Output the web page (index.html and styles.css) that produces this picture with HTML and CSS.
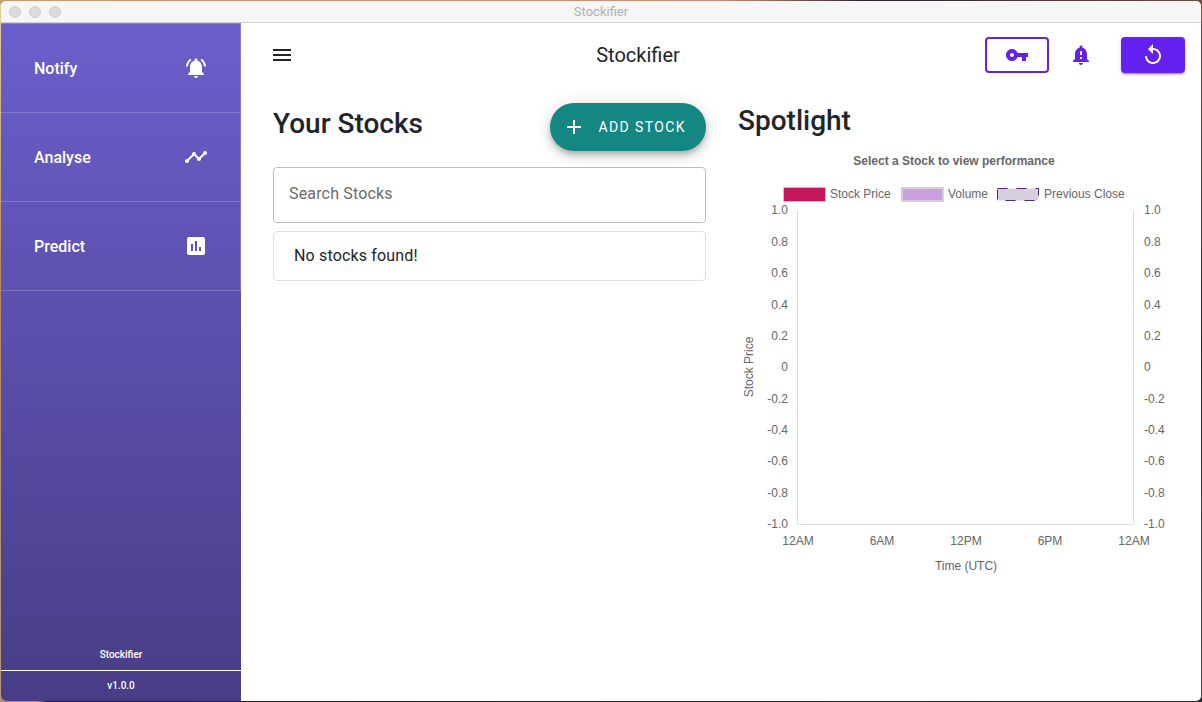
FILE: index.html
```html
<!DOCTYPE html>
<html lang="en">
<head>
<meta charset="utf-8">
<title>Stockifier</title>
<link rel="stylesheet" href="styles.css">
</head>
<body>
<div class="window">
  <div class="titlebar">
    <div class="lights"><span class="light"></span><span class="light"></span><span class="light"></span></div>
    <span class="window-title">Stockifier</span>
  </div>
  <div class="app">
    <aside class="sidebar">
      <nav class="nav">
        <a class="nav-item" href="#notify"><span>Notify</span>
          <svg class="icon" viewBox="0 0 24 24"><path d="M7.58 4.08L6.15 2.65C3.75 4.48 2.17 7.3 2.03 10.5h2c.15-2.65 1.51-4.97 3.55-6.42zm12.39 6.42h2c-.15-3.2-1.73-6.02-4.12-7.85l-1.42 1.43c2.02 1.45 3.39 3.77 3.54 6.42zM18 11c0-3.07-1.64-5.64-4.5-6.32V4c0-.83-.67-1.5-1.5-1.5s-1.5.67-1.5 1.5v.68C7.63 5.36 6 7.92 6 11v5l-2 2v1h16v-1l-2-2v-5zm-6 11c.14 0 .27-.01.4-.04.65-.14 1.18-.58 1.44-1.18.1-.24.15-.5.15-.78h-4c.01 1.1.9 2 2.01 2z"/></svg></a>
        <a class="nav-item" href="#analyse"><span>Analyse</span>
          <svg class="icon" viewBox="0 0 24 24"><path d="M23 8c0 1.1-.9 2-2 2-.18 0-.35-.02-.51-.07l-3.56 3.55c.05.16.07.34.07.52 0 1.1-.9 2-2 2s-2-.9-2-2c0-.18.02-.36.07-.52l-2.55-2.55c-.16.05-.34.07-.52.07s-.36-.02-.52-.07l-4.55 4.56c.05.16.07.33.07.51 0 1.1-.9 2-2 2s-2-.9-2-2 .9-2 2-2c.18 0 .35.02.51.07l4.56-4.55C8.02 9.36 8 9.18 8 9c0-1.1.9-2 2-2s2 .9 2 2c0 .18-.02.36-.07.52l2.55 2.55c.16-.05.34-.07.52-.07s.36.02.52.07l3.55-3.56C19.02 8.35 19 8.18 19 8c0-1.1.9-2 2-2s2 .9 2 2z"/></svg></a>
        <a class="nav-item" href="#predict"><span>Predict</span>
          <svg class="icon" viewBox="0 0 24 24"><path d="M19 3H5c-1.1 0-2 .9-2 2v14c0 1.1.9 2 2 2h14c1.1 0 2-.9 2-2V5c0-1.1-.9-2-2-2zM9 17H7v-7h2v7zm4 0h-2V7h2v10zm4 0h-2v-4h2v4z"/></svg></a>
      </nav>
      <footer class="about">
        <div class="about-row">Stockifier</div>
        <div class="about-row">v1.0.0</div>
      </footer>
    </aside>
    <main class="main">
      <header class="topbar">
        <button class="menu-button" type="button" aria-label="Toggle menu">
          <svg class="menu-icon" viewBox="3 0 18 24"><path d="M3 18h18v-2H3v2zm0-5h18v-2H3v2zm0-7v2h18V6H3z"/></svg>
        </button>
        <h1 class="app-title">Stockifier</h1>
        <div class="actions">
          <button class="action outlined" type="button" aria-label="API key">
            <svg class="icon" viewBox="0 0 24 24"><path d="M12.65 10C11.83 7.67 9.61 6 7 6c-3.31 0-6 2.69-6 6s2.69 6 6 6c2.61 0 4.83-1.67 5.65-4H17v4h4v-4h2v-4H12.65zM7 14c-1.1 0-2-.9-2-2s.9-2 2-2 2 .9 2 2-.9 2-2 2z"/></svg>
          </button>
          <button class="action plain" type="button" aria-label="Alerts">
            <svg class="icon" viewBox="0 0 24 24"><path d="M18 16v-5c0-3.07-1.64-5.64-4.5-6.32V4c0-.83-.67-1.5-1.5-1.5s-1.5.67-1.5 1.5v.68C7.63 5.36 6 7.92 6 11v5l-2 2v1h16v-1l-2-2zm-5 0h-2v-2h2v2zm0-4h-2V8h2v4zm-1 10c1.1 0 2-.9 2-2h-4c0 1.1.89 2 2 2z"/></svg>
          </button>
          <button class="action filled" type="button" aria-label="Reload">
            <svg class="icon" viewBox="0 0 24 24"><path d="M12 5V1L7 6l5 5V7c3.31 0 6 2.69 6 6s-2.69 6-6 6-6-2.69-6-6H4c0 4.42 3.58 8 8 8s8-3.58 8-8-3.58-8-8-8z"/></svg>
          </button>
        </div>
      </header>
      <div class="columns">
        <section class="stocks">
          <div class="stocks-head">
            <h2 class="heading">Your Stocks</h2>
            <button class="fab" type="button">
              <svg class="icon" viewBox="0 0 24 24"><path d="M19 13h-6v6h-2v-6H5v-2h6V5h2v6h6v2z"/></svg>
              <span>ADD STOCK</span>
            </button>
          </div>
          <input class="search" type="text" placeholder="Search Stocks" aria-label="Search Stocks">
          <ul class="stock-list"><li>No stocks found!</li></ul>
        </section>
        <section class="spotlight">
          <h2 class="heading">Spotlight</h2>
          <svg class="chart" viewBox="0 0 433 433" role="img" aria-label="Stock performance chart">
            <text class="chart-title" x="216" y="20" text-anchor="middle">Select a Stock to view performance</text>
            <rect x="46" y="43" width="41" height="13" fill="#c2185b"/>
            <rect x="46" y="43" width="41" height="13" fill="none" stroke="#c2185b" stroke-opacity=".7"/>
            <text x="92" y="53">Stock Price</text>
            <rect x="164" y="43" width="41" height="13" fill="#c9a0dc" stroke="#d9cbe1" stroke-width="2"/>
            <text x="210" y="53">Volume</text>
            <rect x="259.500" y="43.500" width="41" height="12" fill="#d7cfdd" stroke="#4a2a6a" stroke-dasharray="10 9"/>
            <text x="306" y="53">Previous Close</text>
            <path class="axis" d="M59.500 65V379.500H395.500V65"/>
            <g class="ticks-left" text-anchor="end">
              <text x="50" y="69">1.0</text><text x="50" y="101">0.8</text><text x="50" y="132">0.6</text><text x="50" y="164">0.4</text><text x="50" y="195">0.2</text><text x="50" y="226">0</text><text x="50" y="258">-0.2</text><text x="50" y="289">-0.4</text><text x="50" y="320">-0.6</text><text x="50" y="352">-0.8</text><text x="50" y="383">-1.0</text>
            </g>
            <g class="ticks-right">
              <text x="406" y="69">1.0</text><text x="406" y="101">0.8</text><text x="406" y="132">0.6</text><text x="406" y="164">0.4</text><text x="406" y="195">0.2</text><text x="406" y="226">0</text><text x="406" y="258">-0.2</text><text x="406" y="289">-0.4</text><text x="406" y="320">-0.6</text><text x="406" y="352">-0.8</text><text x="406" y="383">-1.0</text>
            </g>
            <g class="ticks-bottom" text-anchor="middle">
              <text x="60" y="400">12AM</text><text x="144" y="400">6AM</text><text x="228" y="400">12PM</text><text x="312" y="400">6PM</text><text x="396" y="400">12AM</text>
              <text x="228" y="425">Time (UTC)</text>
            </g>
            <text text-anchor="middle" transform="translate(15 222) rotate(-90)">Stock Price</text>
          </svg>
        </section>
      </div>
    </main>
  </div>
</div>
</body>
</html>
```
FILE: styles.css
```css
* { box-sizing: border-box; }

body {
  margin: 0;
  min-height: 100vh;
  display: flex;
  padding: 1px;
  font-family: Roboto, "Liberation Sans", sans-serif;
  color: #212529;
  background:
    linear-gradient(90deg, #c99a72, #c88d74 60%, #2b2232 72%, #6b4a42) top / 100% 4px no-repeat,
    linear-gradient(90deg, #b08d6c 0 3%, #1d1b20 4%, #2a2930) bottom / 100% 4px no-repeat,
    linear-gradient(#7b5a52, #2a2830 50%, #4a4a5c) right / 8px 100% no-repeat,
    linear-gradient(#e8cfa2, #b48c58 40%, #b89878) left / 8px 100% no-repeat;
}

.window {
  flex: 1;
  display: flex;
  flex-direction: column;
  border-radius: 5px;
  overflow: hidden;
  background: #fff;
}

.titlebar {
  display: grid;
  grid-template-columns: 1fr auto 1fr;
  align-items: center;
  height: 22px;
  padding: 0 8px;
  background: #f6f6f6;
  border-bottom: 1px solid #d1d1d1;
}
.lights { display: flex; gap: 8px; }
.light {
  width: 12px;
  height: 12px;
  border-radius: 50%;
  background: #dcdcdc;
  border: 1px solid #cdcdcd;
}
.window-title { font-size: 13px; color: #b0b0b0; }

.app { flex: 1; display: flex; }

.sidebar {
  flex: 0 0 240px;
  display: flex;
  flex-direction: column;
  justify-content: space-between;
  color: #fff;
  background: linear-gradient(#6a5fcb, #483d85);
}
.nav { border-top: 1px solid rgba(255, 255, 255, .2); }
.nav-item {
  display: flex;
  align-items: center;
  justify-content: space-between;
  height: 89px;
  padding: 0 32px 0 33px;
  color: #fff;
  font-size: 16px;
  font-weight: 500;
  text-decoration: none;
  border-bottom: 1px solid rgba(255, 255, 255, .2);
  border-right: 1px solid rgba(255, 255, 255, .2);
}
.icon { display: block; width: 24px; height: 24px; fill: currentColor; }

.about { font-size: 10px; font-weight: 500; text-align: center; }
.about-row { line-height: 30px; }
.about-row + .about-row { border-top: 1px solid #fff; }

.main { flex: 1; min-width: 0; }

.topbar {
  display: flex;
  align-items: center;
  justify-content: space-between;
  height: 64px;
  padding: 0 16px 0 32px;
}
button { font-family: inherit; cursor: pointer; }
.menu-button {
  padding: 0;
  border: 0;
  background: none;
  color: #212529;
}
.menu-icon { display: block; width: 18px; height: 24px; fill: currentColor; }
.app-title { margin: 0; font-size: 20px; font-weight: 400; line-height: 24px; }
.actions { display: flex; }
.action {
  display: flex;
  align-items: center;
  justify-content: center;
  width: 64px;
  height: 36px;
  padding: 0;
  border: 0;
  border-radius: 4px;
  background: none;
  color: #6320ee;
}
.outlined { border: 2px solid #6320ee; }
.plain { margin-right: 8px; }
.filled {
  background: #6320ee;
  color: #fff;
  box-shadow: 0 3px 1px -2px rgba(0, 0, 0, .2), 0 2px 2px rgba(0, 0, 0, .14), 0 1px 5px rgba(0, 0, 0, .12);
}

.columns {
  display: grid;
  grid-template-columns: 1fr 1fr;
  gap: 32px;
  padding: 16px 30px 16px 32px;
}
.heading { margin: 0; font-size: 28px; font-weight: 500; line-height: 36px; }
.spotlight .heading { margin-bottom: 6px; }
.stocks-head {
  display: flex;
  align-items: center;
  justify-content: space-between;
  margin-bottom: 16px;
}
.stocks-head .heading { padding-bottom: 6px; }
.fab {
  display: flex;
  align-items: center;
  gap: 12px;
  height: 48px;
  padding: 0 20px 0 12px;
  border: 0;
  border-radius: 24px;
  background: #148783;
  color: #fff;
  font-size: 14px;
  letter-spacing: .1em;
  box-shadow: 0 3px 5px -1px rgba(0, 0, 0, .2), 0 6px 10px rgba(0, 0, 0, .14), 0 1px 18px rgba(0, 0, 0, .12);
}
.search {
  display: block;
  width: 100%;
  height: 56px;
  padding: 0 15px 3px;
  border: 1px solid #bdbdbd;
  border-radius: 4px;
  font-family: inherit;
  font-size: 16px;
  letter-spacing: .01em;
}
.search::placeholder { color: #6b6b6b; opacity: 1; }
.stock-list {
  margin: 8px 0 0;
  padding: 0;
  list-style: none;
  border: 1px solid #dfdfdf;
  border-radius: 4px;
}
.stock-list li { padding: 12px 20px; font-size: 16px; line-height: 24px; letter-spacing: .01em; }

.chart {
  display: block;
  width: 100%;
  height: auto;
  font-family: "Liberation Sans", sans-serif;
  font-size: 12px;
  fill: #666;
}
.chart-title { font-weight: 700; }
.axis { fill: none; stroke: #dedede; }
```
